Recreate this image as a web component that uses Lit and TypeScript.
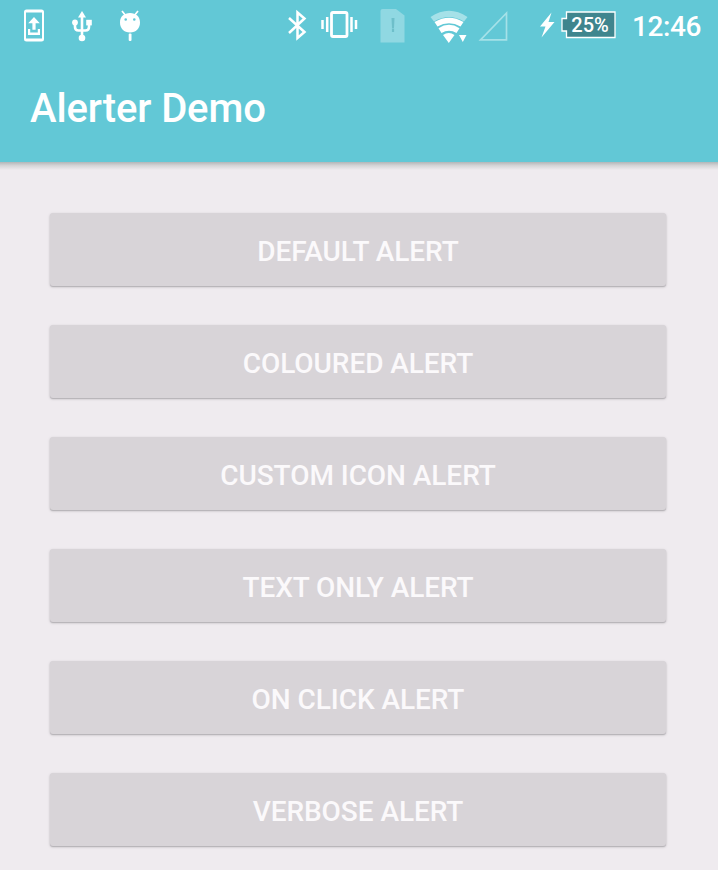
import { LitElement, html, css } from "lit";
import { customElement, property } from "lit/decorators.js";

@customElement("status-bar")
class StatusBar extends LitElement {
  static styles = css`
    :host { display: flex; height: 52px; align-items: center; color: #fff; }
    svg { display: block; height: 52px; flex: none; fill: #fff; }
    .group { display: flex; align-items: center; }
    .notifications { gap: 24px; padding-left: 22px; }
    .system { margin-left: auto; padding-right: 16px; }
    .battery {
      display: flex; align-items: center; margin-left: 3px; width: 56px; height: 52px;
      position: relative;
    }
    .level {
      position: absolute; left: 5px; top: 0; width: 48px; text-align: center;
      font: 500 20px/51px Roboto, sans-serif;
    }
    .time {
      font: 500 28px/52px Roboto, sans-serif; margin-left: 15px; width: 70px;
      padding-top: 2px; white-space: nowrap; letter-spacing: -0.4px;
    }
    .gap-a { margin-left: 12px; }
    .gap-b { margin-left: 20px; }
    .gap-c { margin-left: 24px; }
    .gap-d { margin-left: 8px; }
    .gap-e { margin-left: 30px; }
  `;
  render() {
    return html`
      <div class="group notifications">
        <svg width="24" viewBox="22 0 24 52">
          <path fill-rule="evenodd" d="M26.500 9.500h15q2.500 0 2.500 2.500v27q0 2.500-2.500 2.500h-15q-2.500 0-2.500-2.500V12q0-2.500 2.500-2.500zM26 12.500v26h16V12.500z"/>
          <path d="M34 17l5.800 6.300h-4.200v6.500h-3.200v-6.500h-4.200zM28 29h2.200v3.500h7.600v-3.500H40v6H28z"/>
        </svg>
        <svg width="24" viewBox="70 0 24 52">
          <path d="M82 11l4 6.500h-8z"/>
          <circle cx="82" cy="38" r="3.300"/>
          <circle cx="75" cy="22.500" r="2.900"/>
          <path d="M86.200 19.800h5.600v5.600h-5.600z"/>
          <path d="M82 16v21M75 23v4q0 3.500 3.500 3.500h7q3.500 0 3.500-3.500v-3" fill="none" stroke="#fff" stroke-width="2.600"/>
        </svg>
        <svg width="24" viewBox="118 0 24 52">
          <path d="M122 11l4 5M138 11l-4 5" stroke="#fff" stroke-width="1.700"/>
          <path fill-rule="evenodd" d="M130 13c6 0 10 3.500 10 9.500s-4 10-10 10-10-4-10-10 4-9.500 10-9.500zM125.700 18.200a1.300 1.300 0 100 2.600 1.300 1.300 0 000-2.600zM134.300 18.200a1.300 1.300 0 100 2.600 1.300 1.300 0 000-2.600z"/>
          <rect x="128.700" y="33.500" width="2.800" height="7.500" rx="1"/>
        </svg>
      </div>
      <div class="group system">
        <svg width="20" viewBox="288 0 20 52">
          <path d="M289 18l15.500 14L297.500 38V12.500l7 6L289 33" fill="none" stroke="#fff" stroke-width="2.500"/>
        </svg>
        <svg class="gap-a" width="40" viewBox="320 0 40 52">
          <rect x="331.500" y="12.500" width="15.500" height="24" rx="1.500" fill="none" stroke="#fff" stroke-width="2.800"/>
          <path d="M322.500 20v9M327.200 17v15M351.500 17v15M356 20v9" stroke="#fff" stroke-width="2.500"/>
        </svg>
        <svg class="gap-b" width="26" viewBox="380 0 26 52">
          <path d="M382.500 9h13.500l8.500 6.500v27h-24V11q0-2 2-2z" fill="#90d8e2"/>
          <path d="M391.500 18h3l-.5 10h-2zM391.900 28.500h2.200v3.500h-2.200z" fill="#6ebfca"/>
        </svg>
        <svg class="gap-c" width="38" viewBox="430 0 38 52">
          <path d="M430.500 17Q449 4.500 467.500 17L464 21.500Q449 12.500 434 21.500z" fill="#a5e1e8"/>
          <path d="M434.500 22Q449 13.500 463.500 22L460.500 26.500Q449 20 437.500 26.500zM438.500 28.200Q449 21.500 459.500 28.200L456.500 33Q449 28.500 441.500 33zM443 35Q448.800 31 454.500 35L448.800 43zM459 35h7.500l-3.700 7z"/>
        </svg>
        <svg class="gap-d" width="34" viewBox="476 0 34 52">
          <path d="M506.500 13v26.800H480.500z" fill="none" stroke="#a5e1e8" stroke-width="1.700"/>
        </svg>
        <svg class="gap-e" width="18" viewBox="541 0 18 52">
          <path d="M552.500 12.500L541 26.500h5.500L542.500 37.500 555.500 22h-6z"/>
        </svg>
        <div class="battery">
          <svg width="56" viewBox="561.5 0 56 52">
            <path d="M567 12H615.500v25.500H567V31H562.500V18.500h4.500z" fill="#3f858e" stroke="#fff" stroke-width="1.300"/>
          </svg>
          <span class="level">25%</span>
        </div>
        <span class="time">12:46</span>
      </div>
    `;
  }
}

@customElement("alert-button")
class AlertButton extends LitElement {
  @property() label = "";
  static styles = css`
    :host { display: block; }
    button {
      display: block; width: 100%; height: 73px; border: 0; padding: 4px 0 0; border-radius: 3px;
      background: #d8d4d8; color: #fbf9fb; font: 500 28px/69px Roboto, sans-serif;
      letter-spacing: -0.06px; text-transform: uppercase; text-align: center;
      box-shadow: 0 1px 1px #b6b3b7, 0 1px 3px rgba(0, 0, 0, 0.18);
    }
  `;
  render() {
    return html`<button>${this.label}</button>`;
  }
}

@customElement("app-root")
class AppRoot extends LitElement {
  static styles = css`
    :host { display: block; height: 870px; overflow: hidden; background: #efebef; font-family: Roboto, sans-serif; }
    header { height: 162px; background: #62c8d6; }
    h1 { margin: 0; padding: 1px 0 0 30px; font: 500 40px/112px Roboto, sans-serif; letter-spacing: -0.12px; color: #fff; }
    main {
      display: flex; flex-direction: column; gap: 39px; padding: 51px 52px 0 50px;
      background: linear-gradient(#b2b6b8, #d5d5d7 45%, #efebef) 0 0 / 100% 8px no-repeat;
    }
  `;
  labels = ["Default Alert", "Coloured Alert", "Custom Icon Alert", "Text Only Alert", "On Click Alert", "Verbose Alert"];
  render() {
    return html`
      <header>
        <status-bar></status-bar>
        <h1>Alerter Demo</h1>
      </header>
      <main>${this.labels.map((l) => html`<alert-button .label=${l}></alert-button>`)}</main>
    `;
  }
}
